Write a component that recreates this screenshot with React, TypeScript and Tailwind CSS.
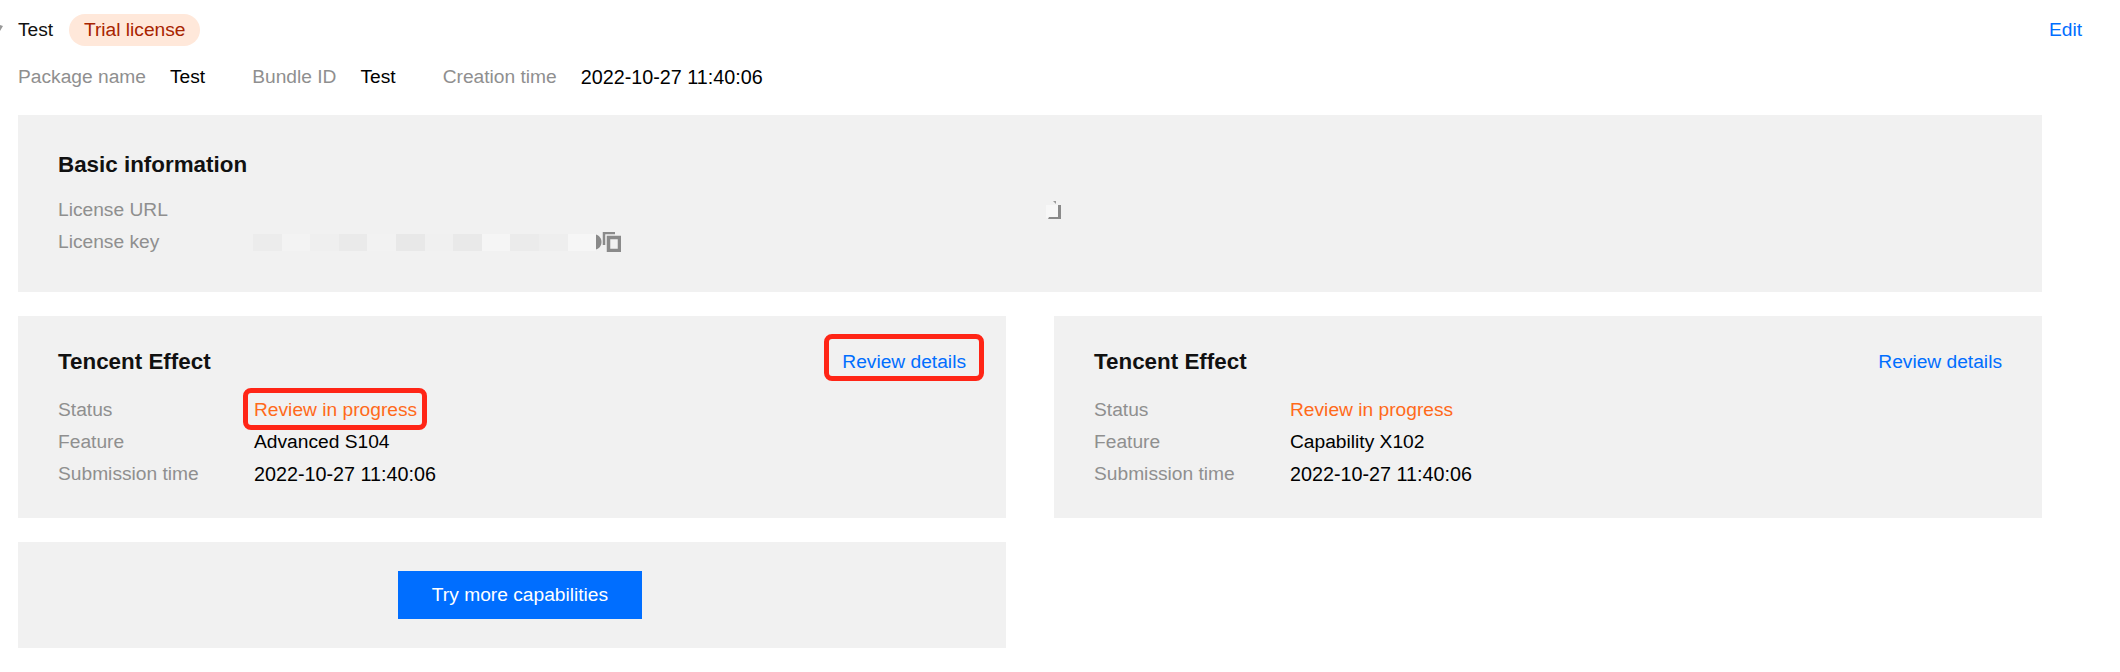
const blurTiles = [
  '#ececec', '#f3f3f3', '#efefef', '#eaeaea', '#f2f2f2', '#e8e8e8', '#f0f0f0', '#e9e9e9', '#f5f5f5', '#ebebeb', '#eeeeee', '#f6f6f6',
]

function Field({ label, children }: { label: string; children: React.ReactNode }) {
  return (
    <div className="flex h-8 items-center">
      <span className="w-[196px] shrink-0 text-[#8f8f8f]">{label}</span>
      {children}
    </div>
  )
}

function MetaItem({ label, value, date }: { label: string; value: string; date?: boolean }) {
  return (
    <div className="flex gap-6">
      <span className="text-[#8f8f8f]">{label}</span>
      <span className={date ? 'text-[19.75px] text-black' : 'text-black'}>{value}</span>
    </div>
  )
}

function CopyIcon() {
  return (
    <svg width="25" height="20" viewBox="0 0 25 20" fill="none" className="block">
      <path d="M0 2.5 C3 3.5 5.5 6 5.5 10 C5.5 14 3 16.5 0 17.5 Z" fill="#8a8a8a" />
      <path d="M8 13 V1 H19" stroke="#8a8a8a" strokeWidth="2.5" />
      <rect x="12.5" y="5.5" width="11" height="13" stroke="#8a8a8a" strokeWidth="3.5" />
    </svg>
  )
}

function EffectCard({ feature, marked }: { feature: string; marked?: boolean }) {
  return (
    <section className="relative h-[202px] bg-[#f1f1f1] px-10 pt-[30px]">
      <div className="flex h-8 items-center justify-between">
        <h3 className="text-[22.4px] font-bold text-[#111]">Tencent Effect</h3>
        <a className="text-[#006eff]">Review details</a>
      </div>
      <div className="mt-4">
        <Field label="Status">
          <span className="text-[#ff6a1a]">Review in progress</span>
        </Field>
        <Field label="Feature">
          <span className="text-black">{feature}</span>
        </Field>
        <Field label="Submission time">
          <span className="text-[19.75px] text-black">2022-10-27 11:40:06</span>
        </Field>
      </div>
      {marked && (
        <>
          <div className="absolute left-[225px] top-[72px] h-[42px] w-[184px] rounded-lg border-[5px] border-[#ff2516]" />
          <div className="absolute left-[806px] top-[18px] h-[47px] w-[160px] rounded-lg border-[5px] border-[#ff2516]" />
        </>
      )}
    </section>
  )
}

export default function App() {
  return (
    <div className="relative h-[672px] w-[2120px] overflow-hidden bg-white pl-[18px] pt-[14px] text-[19.2px] font-['Liberation_Sans',Arial,sans-serif] leading-8">
      <svg width="4" height="6" viewBox="0 0 4 6" className="absolute left-0 top-[25px]">
        <path d="M0 0 L3 1 L0 6 Z" fill="#999" />
      </svg>

      <header className="flex h-8 w-[2066px] items-center">
        <span className="text-[#111]">Test</span>
        <span className="ml-4 flex h-8 w-[131px] items-center justify-center rounded-full bg-[#ffe8da] text-[#a82400]">
          Trial license
        </span>
        <a className="ml-auto mr-[2px] text-[#006eff]">Edit</a>
      </header>

      <div className="mt-[15px] flex h-8 gap-[47px]">
        <MetaItem label="Package name" value="Test" />
        <MetaItem label="Bundle ID" value="Test" />
        <MetaItem label="Creation time" value="2022-10-27 11:40:06" date />
      </div>

      <section className="mt-[22px] h-[177px] w-[2024px] bg-[#f1f1f1] px-10 pt-[34px]">
        <h3 className="h-8 text-[22.4px] font-bold text-[#111]">Basic information</h3>
        <div className="mt-[13px]">
          <Field label="License URL">
            <div className="ml-[792px] mt-[2px]">
              <svg width="16" height="22" viewBox="0 0 16 22" className="block">
                <rect x="0" y="5" width="12" height="13" fill="#f7f7f7" />
                <path d="M7 1 L10 1 L10 4 Z" fill="#999" />
                <path d="M12 5 H15 V19 H2 L3 17 H12 Z" fill="#8a8a8a" />
              </svg>
            </div>
          </Field>
          <Field label="License key">
            <div className="-ml-[1px] flex h-[17px]">
              {blurTiles.map((color, i) => (
                <div key={i} className="h-full w-[28.6px]" style={{ backgroundColor: color }} />
              ))}
            </div>
            <CopyIcon />
          </Field>
        </div>
      </section>

      <div className="mt-6 grid w-[2024px] grid-cols-[988px_988px] gap-x-12 gap-y-6">
        <EffectCard feature="Advanced S104" marked />
        <EffectCard feature="Capability X102" />
        <section className="flex h-[106px] items-center justify-center bg-[#f1f1f1] pl-4">
          <button className="h-12 w-[244px] bg-[#006eff] text-white">Try more capabilities</button>
        </section>
      </div>
    </div>
  )
}
